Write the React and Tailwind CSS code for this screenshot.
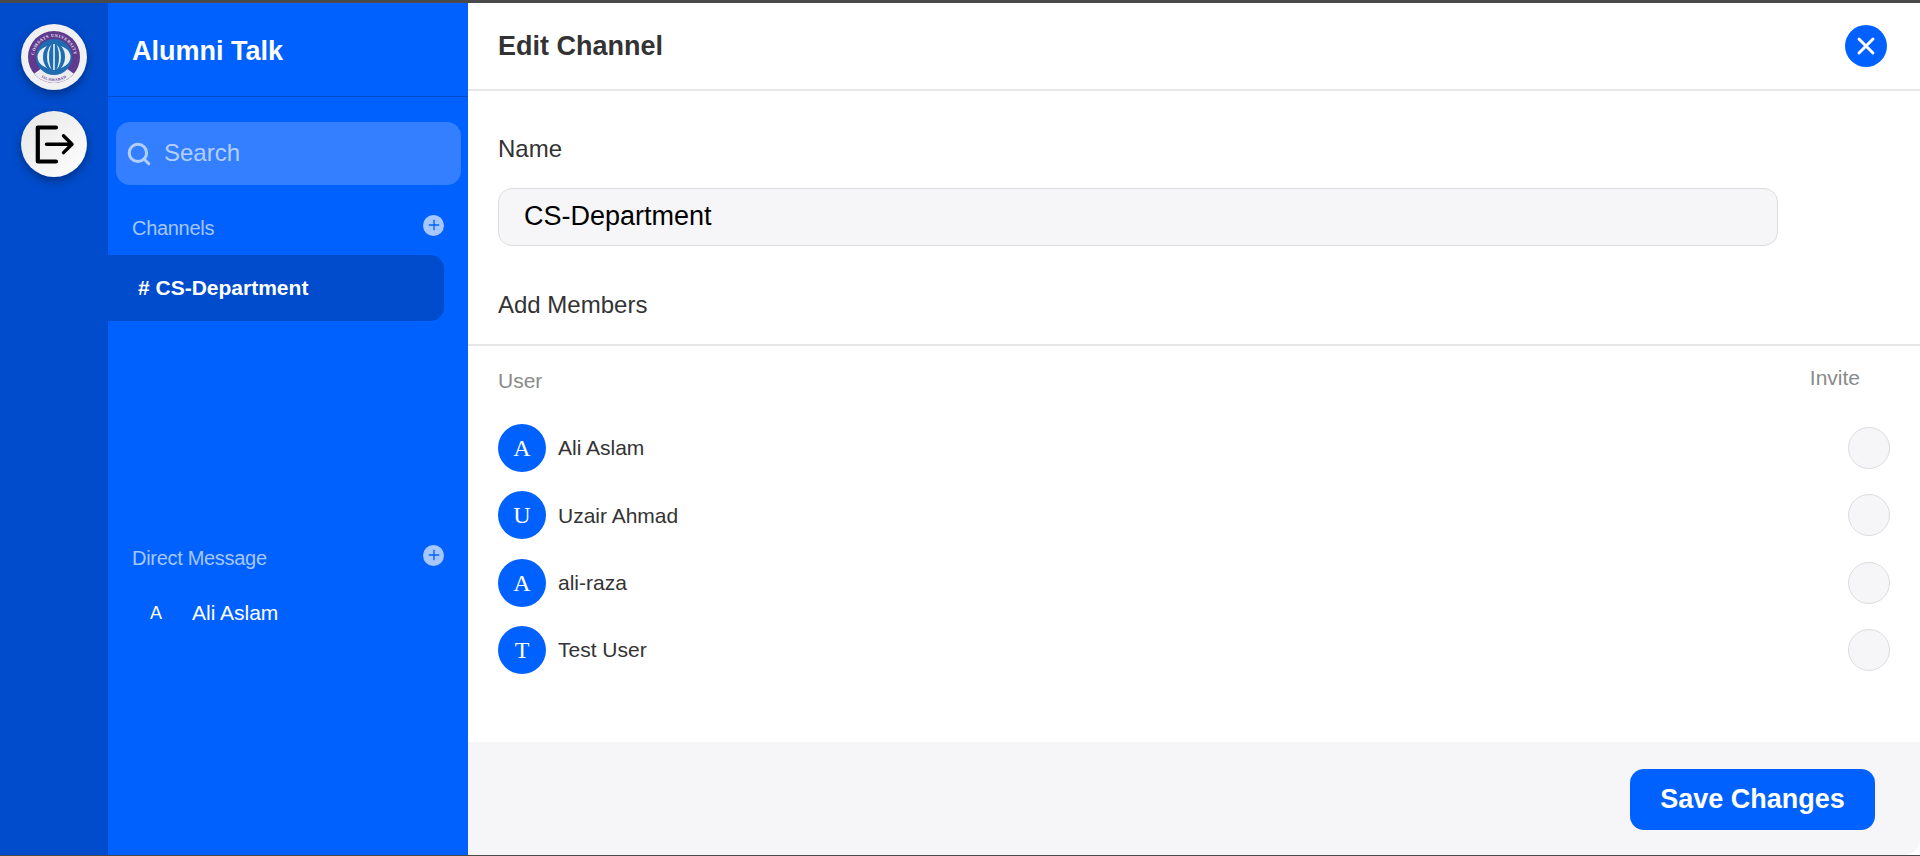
import React from 'react';
import { Search, X, Plus } from 'lucide-react';

const members = [
  { initial: 'A', name: 'Ali Aslam' },
  { initial: 'U', name: 'Uzair Ahmad' },
  { initial: 'A', name: 'ali-raza' },
  { initial: 'T', name: 'Test User' },
];

const Logo = () => (
  <svg viewBox="0 0 66 66" className="w-[66px] h-[66px] block">
    <defs>
      <path id="top-arc" d="M 14.2 39.8 A 20 20 0 1 1 51.8 39.8" />
      <path id="bottom-arc" d="M 14.6 48.4 A 24 24 0 0 0 51.4 48.4" />
    </defs>
    <circle cx="33" cy="33" r="33" fill="#f1f0f2" />
    <circle cx="33" cy="33" r="26" fill="#5f3a8e" />
    <path d="M 13.1 49.7 A 26 26 0 0 0 52.9 49.7 L 45 44 A 18 18 0 0 1 21 44 Z" fill="#ecebf0" />
    <text fontSize="4.4" fontWeight="700" fontFamily="'Liberation Serif', serif" fill="#ece6f2" letterSpacing="0.5">
      <textPath href="#top-arc" startOffset="50%" textAnchor="middle">COMSATS UNIVERSITY</textPath>
    </text>
    <text fontSize="3.8" fontWeight="700" fontFamily="'Liberation Serif', serif" fill="#5f3a8e" letterSpacing="0.4">
      <textPath href="#bottom-arc" startOffset="50%" textAnchor="middle">ISLAMABAD</textPath>
    </text>
    <circle cx="33" cy="33" r="18" fill="#1f6cb0" />
    <ellipse cx="33" cy="33" rx="16.5" ry="12" fill="#e8f0f6" />
    <ellipse cx="33" cy="33" rx="11" ry="14" fill="#1f6cb0" />
    <ellipse cx="33" cy="33" rx="7" ry="13" fill="#e8f0f6" />
    <ellipse cx="33" cy="33" rx="5" ry="14" fill="#1f6cb0" />
    <rect x="32.2" y="20" width="1.6" height="26" fill="#e8f0f6" />
  </svg>
);

const ExitIcon = () => (
  <svg viewBox="0 0 66 66" className="w-[66px] h-[66px] block" fill="none" stroke="#000000">
    <path d="M 35 16.5 H 16.8 V 50.5 H 35" strokeWidth="4.2" strokeLinejoin="round" strokeLinecap="round" />
    <path d="M 25.5 33.2 H 51 M 42.5 24.8 L 51 33.2 L 42.5 41.6" strokeWidth="3.4" strokeLinejoin="round" strokeLinecap="round" />
  </svg>
);

const SectionHeading = ({ label }) => (
  <div className="flex items-center justify-between pl-[24px] w-[336px]">
    <span className="text-[20px] leading-[24px] tracking-[-0.3px] text-[#a6c6ff]">{label}</span>
    <span className="-mt-[6px] w-[21px] h-[21px] rounded-full bg-[#a6c6ff] flex items-center justify-center">
      <Plus size={16} strokeWidth={2} color="#0061ff" />
    </span>
  </div>
);

const App = () => {
  return (
    <div className="w-[1920px] h-[856px] flex flex-col overflow-hidden bg-white font-['Liberation_Sans',Arial,sans-serif]">
      <div className="h-[3px] bg-[#4a4a4a]" />

      <div className="flex-1 flex min-h-0">
        <div className="w-[108px] bg-[#004ccc] flex flex-col items-center gap-[21px] pt-[21px]">
          <div className="rounded-full shadow-[0_4px_10px_rgba(0,0,0,0.35)]">
            <Logo />
          </div>
          <div className="w-[66px] h-[66px] rounded-full bg-gradient-to-br from-[#e6e6e6] to-white shadow-[0_4px_10px_rgba(0,0,0,0.35)]">
            <ExitIcon />
          </div>
        </div>

        <div className="w-[360px] bg-[#0061ff]">
          <div className="h-[94px] border-b border-[#004ccc] pl-[24px] pt-[33px]">
            <h1 className="text-[27px] leading-[30px] font-bold text-white">Alumni Talk</h1>
          </div>
          <div className="ml-[8px] mt-[25px] w-[345px] h-[63px] rounded-[14px] bg-[#337fff] flex items-center pl-[10px] gap-[12px]">
            <Search size={26} strokeWidth={2.8} color="#b3cfff" />
            <span className="text-[24px] text-[#b3cfff] -mt-[2px]">Search</span>
          </div>

          <div className="mt-[31px]">
            <SectionHeading label="Channels" />
          </div>
          <div className="mt-[15px] w-[336px] h-[66px] rounded-r-[14px] bg-[#004ccc] flex items-center pl-[30px]">
            <span className="text-[21px] font-bold text-white"># CS-Department</span>
          </div>

          <div className="mt-[225px]">
            <SectionHeading label="Direct Message" />
          </div>
          <div className="mt-[31px] flex items-center text-white">
            <span className="w-[84px] pl-[42px] text-[18px] leading-[24px]">A</span>
            <span className="text-[21px] leading-[24px]">Ali Aslam</span>
          </div>
        </div>

        <div className="flex-1 flex flex-col min-w-0">
          <div className="h-[88px] border-b-2 border-[#e6e6e8] flex items-center justify-between pl-[30px] pr-[33px] shrink-0">
            <h2 className="text-[27px] font-bold text-[#333333]">Edit Channel</h2>
            <button className="w-[42px] h-[42px] rounded-full bg-[#0061ff] flex items-center justify-center">
              <X size={28} strokeWidth={2.5} color="#ffffff" />
            </button>
          </div>

          <div className="flex-1">
            <div className="px-[30px] pt-[43px]">
              <label className="block text-[24px] leading-[30px] text-[#333333]">Name</label>
              <div className="mt-[24px] w-[1280px] h-[58px] rounded-[14px] border border-[#dddde0] bg-[#f6f6f9] flex items-center pl-[25px] pb-[2px] text-[27px] text-black">
                CS-Department
              </div>
              <div className="mt-[44px] text-[24px] leading-[30px] text-[#333333]">Add Members</div>
            </div>

            <div className="mt-[24px] border-t-2 border-[#e6e6e8] pl-[30px] pr-[30px]">
              <div className="flex justify-between h-[64px] pt-[20px] pr-[30px] text-[21px] leading-[24px] text-[#8a8a8a]">
                <span className="pt-[3px]">User</span>
                <span>Invite</span>
              </div>
              <div className="flex flex-col gap-[19.33px] mt-[14px]">
                {members.map((m, i) => (
                  <div key={i} className="flex items-center justify-between h-[48px]">
                    <div className="flex items-center gap-[12px]">
                      <span className="w-[48px] h-[48px] rounded-full bg-[#0061ff] flex items-center justify-center text-white text-[24px] font-['Liberation_Serif',serif]">
                        {m.initial}
                      </span>
                      <span className="text-[21px] text-[#333333]">{m.name}</span>
                    </div>
                    <span className="w-[42px] h-[42px] rounded-full border border-[#dddde0] bg-[#f6f6f9]" />
                  </div>
                ))}
              </div>
            </div>
          </div>

          <div className="h-[113px] bg-[#f6f6f9] rounded-br-[16px] shrink-0 flex justify-end pt-[27px] pr-[45px]">
            <button className="w-[245px] h-[61px] rounded-[14px] bg-[#0061ff] text-white font-bold text-[27px]">
              Save Changes
            </button>
          </div>
        </div>
      </div>

      <div className="h-px bg-[#4a4a4a]" />
    </div>
  );
};

export default App;
